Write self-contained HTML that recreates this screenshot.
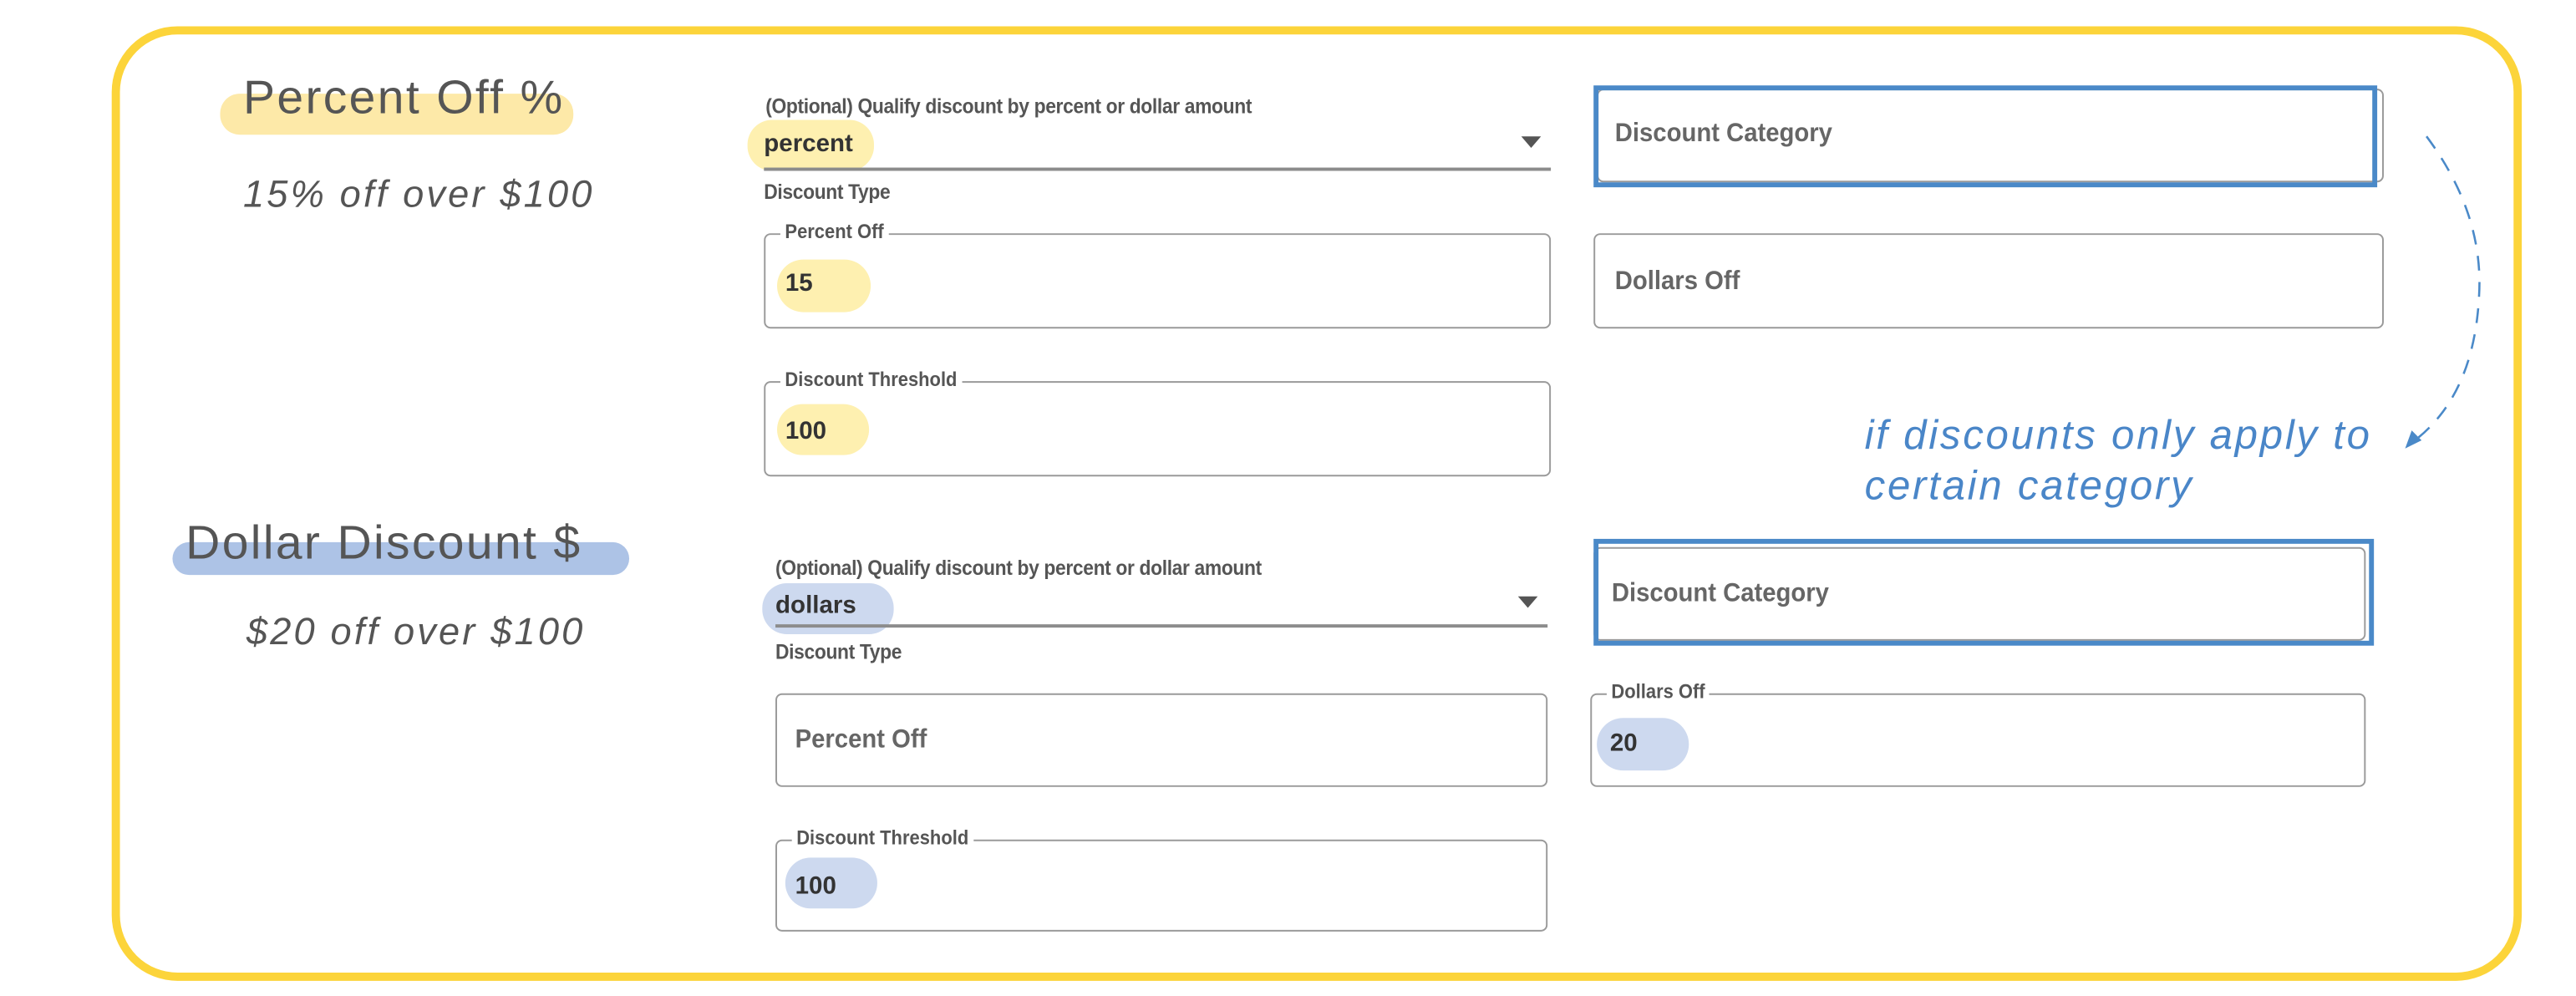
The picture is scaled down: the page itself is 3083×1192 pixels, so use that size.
<!DOCTYPE html>
<html><head><meta charset="utf-8"><style>
html,body{margin:0;padding:0;background:#fff;}
body{width:3083px;height:1191px;overflow:hidden;position:relative;}
#w{position:absolute;left:0;top:0;width:1568px;height:606px;transform:scale(1.9662);transform-origin:0 0;font-family:"Liberation Sans",sans-serif;}
.a{position:absolute;white-space:nowrap;}
.frame{position:absolute;left:68px;top:16px;width:1457px;height:571px;border:5px solid #fcd43a;border-radius:40px;}
.h1{font-size:29px;color:#555;letter-spacing:1.2px;}
.sub{font-size:23px;color:#555;font-style:italic;letter-spacing:1.6px;}
.hl{position:absolute;border-radius:12px;}
.lab{font-size:12.5px;font-weight:bold;color:#555;letter-spacing:-0.2px;transform:scaleX(0.93);transform-origin:0 0;}
.val{font-size:15px;font-weight:bold;color:#333;}
.ph{font-size:16px;font-weight:bold;color:#666;transform:scaleX(0.93);transform-origin:0 0;}
.box{position:absolute;border:1.2px solid #9a9a9a;border-radius:4px;box-sizing:border-box;}
.leg{position:absolute;top:-9px;left:9px;background:#fff;padding:0 3px;font-size:12px;font-weight:bold;color:#555;transform:scaleX(0.93);transform-origin:0 0;}
.blue{position:absolute;border:3px solid #4a89c8;box-sizing:border-box;}
.line{position:absolute;height:1.5px;background:#8c8c8c;}
.tri{position:absolute;width:0;height:0;border-left:6px solid transparent;border-right:6px solid transparent;border-top:7px solid #555;}
.note{font-size:25px;color:#4a86c8;font-style:italic;letter-spacing:1.4px;}
</style></head><body><div id="w">
<div class="frame"></div>

<!-- Section 1 -->
<div class="hl" style="left:134px;top:57px;width:215px;height:25px;background:#fde9a8;"></div>
<div class="a h1" style="left:148px;top:44px;">Percent Off %</div>
<div class="a sub" style="left:148px;top:105px;">15% off over $100</div>

<div class="a lab" style="left:466px;top:58px;">(Optional) Qualify discount by percent or dollar amount</div>
<div class="hl" style="left:455px;top:73px;width:77px;height:31px;background:#fef0b0;border-radius:15px;"></div>
<div class="a val" style="left:465px;top:79px;">percent</div>
<div class="tri" style="left:926px;top:83px;"></div>
<div class="line" style="left:465px;top:102px;width:479px;"></div>
<div class="a lab" style="left:465px;top:110px;">Discount Type</div>

<div class="box" style="left:465px;top:142px;width:479px;height:58px;"><div class="leg">Percent Off</div></div>
<div class="hl" style="left:473px;top:158px;width:57px;height:32px;background:#fef0b0;border-radius:16px;"></div>
<div class="a val" style="left:478px;top:164px;">15</div>

<div class="box" style="left:465px;top:232px;width:479px;height:58px;"><div class="leg">Discount Threshold</div></div>
<div class="hl" style="left:473px;top:246px;width:56px;height:31px;background:#fef0b0;border-radius:16px;"></div>
<div class="a val" style="left:478px;top:254px;">100</div>

<div class="box" style="left:972px;top:54px;width:479px;height:57px;"></div>
<div class="blue" style="left:970px;top:52px;width:477px;height:62px;"></div>
<div class="a ph" style="left:983px;top:73px;">Discount Category</div>

<div class="box" style="left:970px;top:142px;width:481px;height:58px;"></div>
<div class="a ph" style="left:983px;top:163px;">Dollars Off</div>

<div class="a note" style="left:1135px;top:251px;">if discounts only apply to</div>
<div class="a note" style="left:1135px;top:282px;">certain category</div>

<svg class="a" style="left:0;top:0;" width="1568" height="606">
<path d="M1477 83 Q1512 130 1509 180 Q1506 240 1470 268" fill="none" stroke="#4a89c8" stroke-width="1.3" stroke-dasharray="9,7"/>
<path d="M1464 273 L1468 262 L1474 268 Z" fill="#4a89c8"/>
</svg>

<!-- Section 2 -->
<div class="hl" style="left:105px;top:330px;width:278px;height:20px;background:#adc3e6;"></div>
<div class="a h1" style="left:113px;top:315px;">Dollar Discount $</div>
<div class="a sub" style="left:150px;top:371px;">$20 off over $100</div>

<div class="a lab" style="left:472px;top:339px;">(Optional) Qualify discount by percent or dollar amount</div>
<div class="hl" style="left:464px;top:355px;width:80px;height:31px;background:#cdd9ef;border-radius:15px;"></div>
<div class="a val" style="left:472px;top:360px;">dollars</div>
<div class="tri" style="left:924px;top:363px;"></div>
<div class="line" style="left:472px;top:380px;width:470px;"></div>
<div class="a lab" style="left:472px;top:390px;">Discount Type</div>

<div class="box" style="left:472px;top:422px;width:470px;height:57px;"></div>
<div class="a ph" style="left:484px;top:442px;">Percent Off</div>

<div class="box" style="left:472px;top:511px;width:470px;height:56px;"><div class="leg">Discount Threshold</div></div>
<div class="hl" style="left:478px;top:522px;width:56px;height:31px;background:#cdd9ef;border-radius:16px;"></div>
<div class="a val" style="left:484px;top:531px;">100</div>

<div class="box" style="left:970px;top:333px;width:470px;height:57px;"></div>
<div class="blue" style="left:970px;top:328px;width:475px;height:65px;"></div>
<div class="a ph" style="left:981px;top:353px;">Discount Category</div>

<div class="box" style="left:968px;top:422px;width:472px;height:57px;"><div class="leg">Dollars Off</div></div>
<div class="hl" style="left:972px;top:437px;width:56px;height:32px;background:#cdd9ef;border-radius:16px;"></div>
<div class="a val" style="left:980px;top:444px;">20</div>
</div></body></html>
